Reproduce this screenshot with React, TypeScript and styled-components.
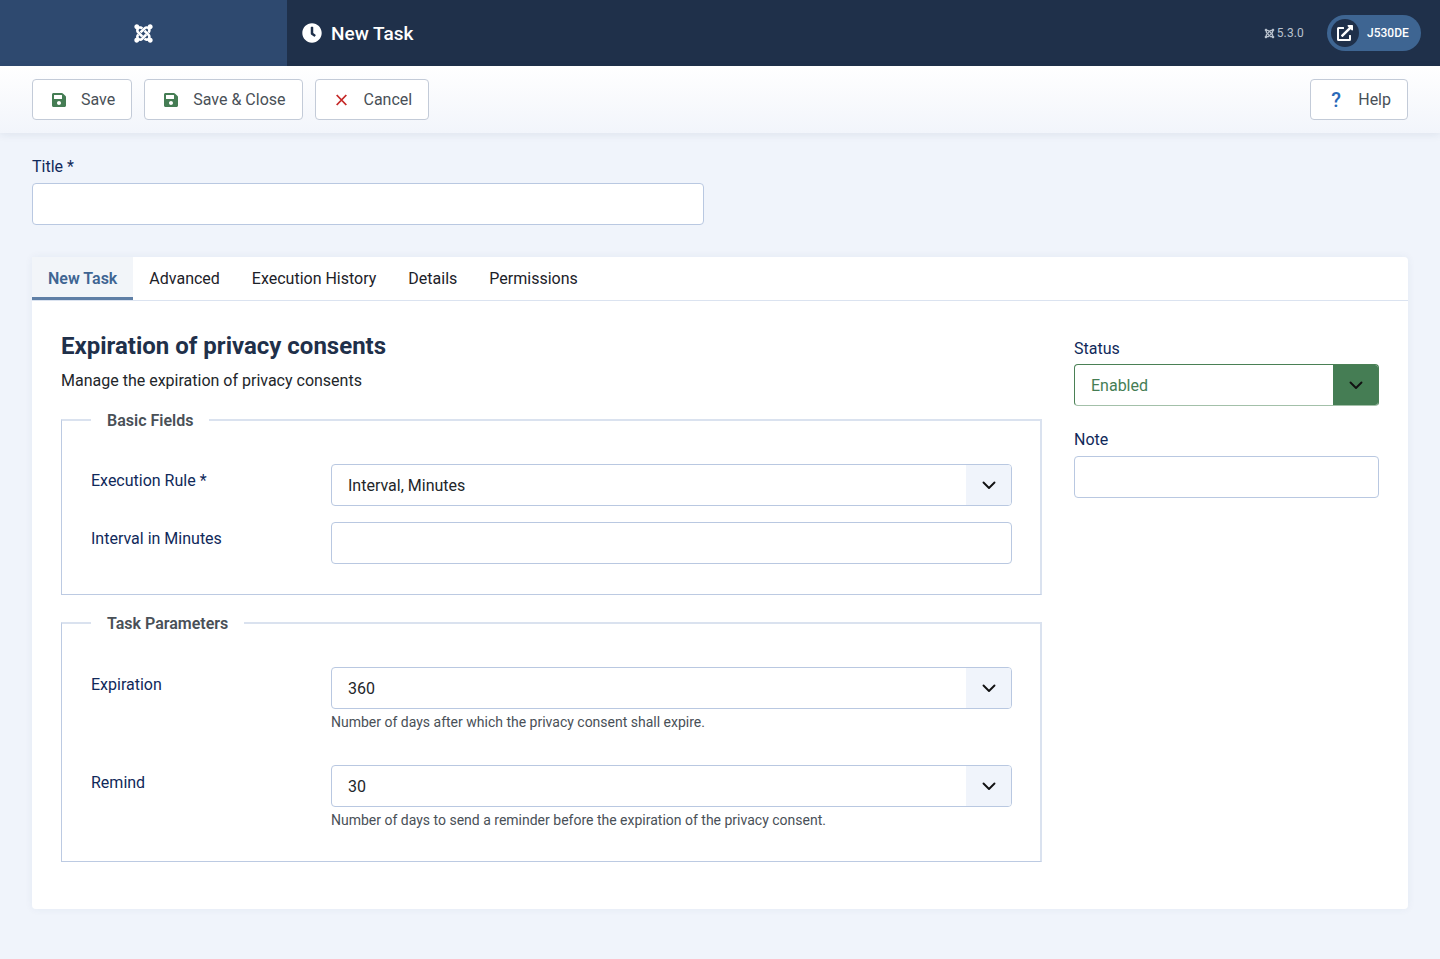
import React from "react";
import styled, { createGlobalStyle } from "styled-components";
import { FaClock, FaExternalLinkAlt, FaJoomla, FaSave } from "react-icons/fa";

const Global = createGlobalStyle`
  html, body { margin: 0; padding: 0; background: #f0f4fb; }
  body { font-family: Roboto, "Liberation Sans", sans-serif; font-size: 16px; color: #22262a; }
  * { box-sizing: border-box; }
`;

const Page = styled.div`
  min-height: 959px;
  display: flex;
  flex-direction: column;
  background: #f0f4fb;
`;

const Header = styled.header`
  height: 66px;
  display: flex;
  align-items: center;
  background: #1f304a;
  color: #fff;
  flex: none;
`;
const Brand = styled.div`
  width: 287px;
  height: 100%;
  background: #2e496f;
  display: flex;
  align-items: center;
  justify-content: center;
`;
const PageTitle = styled.h1`
  margin: 0 0 0 15px;
  display: flex;
  align-items: center;
  gap: 9px;
  font-size: 19px;
  font-weight: 500;
  color: #fff;
  flex: 1;
`;
const Version = styled.span`
  display: flex;
  align-items: center;
  gap: 2px;
  font-size: 12px;
  color: #b9c2ce;
  letter-spacing: 0.15px;
`;
const UserPill = styled.div`
  margin: 0 19px 0 23px;
  width: 94px;
  height: 36px;
  border-radius: 18px;
  background: #3e6592;
  display: flex;
  align-items: center;
  font-size: 12px;
  font-weight: 500;
  color: #fff;
  padding-left: 4px;
  gap: 8px;
`;
const PillIcon = styled.span`
  width: 28px;
  height: 28px;
  border-radius: 50%;
  background: #1f304a;
  display: flex;
  align-items: center;
  justify-content: center;
`;

const Toolbar = styled.div`
  height: 67px;
  flex: none;
  padding: 13px 32px 0;
  display: flex;
  gap: 12px;
  background: linear-gradient(180deg, #ffffff 0%, #f2f5fb 100%);
  box-shadow: 0 2px 8px rgba(30, 55, 90, 0.08);
`;
const Button = styled.button<{ $push?: boolean }>`
  height: 41px;
  padding: 0 16px 0 ${(p) => (p.$push ? "17px" : "18px")};
  display: flex;
  align-items: center;
  gap: 14px;
  background: #fff;
  border: 1px solid #c3cbd8;
  border-radius: 4px;
  font: 400 16px Roboto, sans-serif;
  color: #495057;
  margin-left: ${(p) => (p.$push ? "auto" : "0")};
`;
const ButtonIcon = styled.span<{ $color: string }>`
  width: 16px;
  height: 16px;
  display: flex;
  align-items: center;
  justify-content: center;
  color: ${(p) => p.$color};
`;
const QuestionMark = styled.span`
  font-size: 20px;
  line-height: 16px;
  font-weight: 500;
`;

const Main = styled.main`
  padding: 24px 32px 50px;
`;
const Label = styled.label`
  display: block;
  font-size: 16px;
  line-height: 19px;
  color: #10295a;
`;
const TitleField = styled.div`
  width: 672px;
  margin-bottom: 32px;
  ${Label} { margin-bottom: 7px; }
`;
const Input = styled.div`
  height: 42px;
  background: #fff;
  border: 1px solid #b9c8e1;
  border-radius: 4px;
`;

const Card = styled.section`
  background: #fff;
  border-radius: 4px;
  box-shadow: 0 0 8px rgba(40, 70, 120, 0.06);
  height: 652px;
`;
const Tabs = styled.nav`
  display: flex;
  height: 44px;
  border-bottom: 1px solid #dbe3f0;
`;
const Tab = styled.div<{ $active?: boolean }>`
  height: 43px;
  padding: 3px 16px 0;
  display: flex;
  align-items: center;
  font-size: 16px;
  font-weight: ${(p) => (p.$active ? 600 : 400)};
  color: ${(p) => (p.$active ? "#3f6593" : "#1c2128")};
  background: ${(p) => (p.$active ? "#f2f5f9" : "transparent")};
  border-bottom: 3px solid ${(p) => (p.$active ? "#5f7fa6" : "transparent")};
`;
const Body = styled.div`
  display: grid;
  grid-template-columns: 981px 305px;
  column-gap: 32px;
  padding: 29px 29px 0;
`;
const Heading = styled.h2`
  margin: 0;
  font-size: 24px;
  line-height: 32px;
  font-weight: 700;
  color: #1f304a;
`;
const Sub = styled.p`
  margin: 7px 0 0;
  font-size: 16px;
  line-height: 24px;
  color: #22262a;
`;
const Fieldset = styled.fieldset<{ $top: number }>`
  margin: ${(p) => p.$top}px 0 0;
  padding: 34px 29px 0 29px;
  border-style: solid;
  border-color: #dae2ef;
  border-width: 2px 2px 1px 1px;
  border-left-color: #bccae2;
  border-bottom-color: #bccae2;
  min-width: 0;
`;
const Legend = styled.legend`
  margin-left: 0;
  padding: 2px 16px 0;
  font-size: 16px;
  line-height: 19px;
  font-weight: 600;
  color: #495057;
`;
const Row = styled.div<{ $gap: number }>`
  display: grid;
  grid-template-columns: 240px 681px;
  margin-bottom: ${(p) => p.$gap}px;
`;
const RowLabel = styled(Label)<{ $top?: number }>`
  padding-top: ${(p) => p.$top ?? 7}px;
`;
const SelectBox = styled.div<{ $green?: boolean }>`
  height: 42px;
  background: #fff;
  border: 1px solid ${(p) => (p.$green ? "#4a8055" : "#b9c8e1")};
  border-bottom-color: ${(p) => (p.$green ? "#a3c0a9" : "#b9c8e1")};
  border-radius: 4px;
  display: flex;
  align-items: center;
  justify-content: space-between;
  padding-left: 16px;
  font-size: 16px;
  color: ${(p) => (p.$green ? "#457d54" : "#22262a")};
  overflow: hidden;
`;
const Caret = styled.span<{ $green?: boolean }>`
  width: 45px;
  align-self: stretch;
  display: flex;
  align-items: center;
  justify-content: center;
  background: ${(p) => (p.$green ? "#457d54" : "#f0f4fb")};
`;
const Hint = styled.div`
  margin-top: 5px;
  font-size: 14px;
  line-height: 17px;
  color: #495057;
`;
const Side = styled.aside`
  padding-top: 9px;
`;
const SideField = styled.div<{ $labelGap: number; $gap: number }>`
  margin-bottom: ${(p) => p.$gap}px;
  ${Label} { margin-bottom: ${(p) => p.$labelGap}px; }
`;

const Cross = () => (
  <svg width="12" height="12" viewBox="0 0 12 12" fill="none" stroke="currentColor" strokeWidth="1.8" aria-hidden>
    <path d="M0.7 1 L10.3 11 M10.3 1 L0.7 11" />
  </svg>
);

const Chevron = ({ color = "#111" }: { color?: string }) => (
  <svg width="16" height="16" viewBox="0 0 16 16" fill="none" stroke={color} strokeWidth="1.9" strokeLinecap="round" strokeLinejoin="round" aria-hidden>
    <path d="M2.5 5.5 L8 11 L13.5 5.5" />
  </svg>
);

const Select = ({ value, green }: { value: string; green?: boolean }) => (
  <SelectBox $green={green}>
    {value}
    <Caret $green={green}>
      <Chevron />
    </Caret>
  </SelectBox>
);

export default function App() {
  return (
    <Page>
      <Global />
      <Header>
        <Brand>
          <FaJoomla size={21} color="#fff" />
        </Brand>
        <PageTitle>
          <FaClock size={20} color="#fff" />
          New Task
        </PageTitle>
        <Version>
          <FaJoomla size={11} color="#b9c2ce" />
          5.3.0
        </Version>
        <UserPill>
          <PillIcon>
            <FaExternalLinkAlt size={16} color="#fff" />
          </PillIcon>
          J530DE
        </UserPill>
      </Header>
      <Toolbar>
        <Button>
          <ButtonIcon $color="#457d54"><FaSave size={16} /></ButtonIcon>
          Save
        </Button>
        <Button>
          <ButtonIcon $color="#457d54"><FaSave size={16} /></ButtonIcon>
          Save &amp; Close
        </Button>
        <Button>
          <ButtonIcon $color="#c52827"><Cross /></ButtonIcon>
          Cancel
        </Button>
        <Button $push>
          <ButtonIcon $color="#2a69b8"><QuestionMark>?</QuestionMark></ButtonIcon>
          Help
        </Button>
      </Toolbar>
      <Main>
        <TitleField>
          <Label>Title *</Label>
          <Input />
        </TitleField>
        <Card>
          <Tabs>
            <Tab $active>New Task</Tab>
            <Tab>Advanced</Tab>
            <Tab>Execution History</Tab>
            <Tab>Details</Tab>
            <Tab>Permissions</Tab>
          </Tabs>
          <Body>
            <div>
              <Heading>Expiration of privacy consents</Heading>
              <Sub>Manage the expiration of privacy consents</Sub>
              <Fieldset $top={16}>
                <Legend>Basic Fields</Legend>
                <Row $gap={16}>
                  <RowLabel>Execution Rule *</RowLabel>
                  <Select value="Interval, Minutes" />
                </Row>
                <Row $gap={30}>
                  <RowLabel>Interval in Minutes</RowLabel>
                  <Input />
                </Row>
              </Fieldset>
              <Fieldset $top={17}>
                <Legend>Task Parameters</Legend>
                <Row $gap={34}>
                  <RowLabel $top={8}>Expiration</RowLabel>
                  <div>
                    <Select value="360" />
                    <Hint>Number of days after which the privacy consent shall expire.</Hint>
                  </div>
                </Row>
                <Row $gap={32}>
                  <RowLabel $top={8}>Remind</RowLabel>
                  <div>
                    <Select value="30" />
                    <Hint>Number of days to send a reminder before the expiration of the privacy consent.</Hint>
                  </div>
                </Row>
              </Fieldset>
            </div>
            <Side>
              <SideField $labelGap={6} $gap={24}>
                <Label>Status</Label>
                <Select value="Enabled" green />
              </SideField>
              <SideField $labelGap={7} $gap={23}>
                <Label>Note</Label>
                <Input />
              </SideField>
            </Side>
          </Body>
        </Card>
      </Main>
    </Page>
  );
}
